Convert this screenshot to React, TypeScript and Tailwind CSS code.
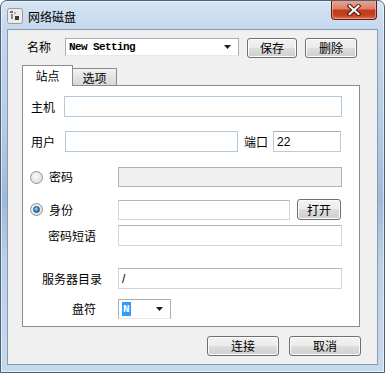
import React from 'react';

const cjk = "font-['Noto_Sans_CJK_SC',sans-serif] text-[12px] leading-none text-black";

function Btn({ label, className }: { label: string; className: string }) {
  return (
    <div
      className={`${className} ${cjk} flex items-center justify-center rounded-[3px] border border-[#707070] bg-[linear-gradient(#f2f2f2_0%,#ebebeb_50%,#dddddd_50%,#cfcfcf_100%)] shadow-[inset_0_0_0_1px_#fcfcfc]`}
    >
      {label}
    </div>
  );
}

function Field({ className, children }: { className: string; children?: React.ReactNode }) {
  return (
    <div className={`${className} flex items-center border px-[3px] font-['Liberation_Sans',sans-serif] text-[12px]`}>
      {children}
    </div>
  );
}

function Arrow() {
  return (
    <svg width="8" height="4" viewBox="0 0 8 4" className="ml-auto mr-[3px]">
      <path d="M0 0h7L3.5 4z" fill="#1a1a1a" />
    </svg>
  );
}

function Radio({ checked }: { checked?: boolean }) {
  return (
    <div className="flex h-[13px] w-[13px] items-center justify-center rounded-full border border-[#8e8f8f] bg-[radial-gradient(circle_at_40%_40%,#fafafa,#d6d6d6)]">
      {checked && (
        <div className="h-[7px] w-[7px] rounded-full border border-[#1c4f80] bg-[radial-gradient(circle_at_40%_35%,#9fd7f7,#2a80c4_60%,#135a94)]" />
      )}
    </div>
  );
}

export default function App() {
  return (
    <div className="h-[373px] w-[385px] overflow-hidden rounded-t-[7px] border border-[#4e6176] bg-[linear-gradient(180deg,#d6e5f5_0px,#c3d7ed_30px,#b6cde7_120px,#9fbad9_200px,#bad0e8_260px,#c6daee_373px)] px-[6px] pb-[7px] shadow-[inset_0_0_0_1px_rgba(255,255,255,0.55)]">
      {/* title bar */}
      <div className="flex h-[28px] items-start">
        <div className="mt-[7px] flex items-center gap-[5px]">
          <svg width="16" height="16" viewBox="0 0 16 16">
            <rect x="0.5" y="0.5" width="15" height="15" rx="2" fill="#ececec" stroke="#9a9a9a" />
            <rect x="3" y="3" width="3" height="2" fill="#6e6e6e" />
            <rect x="4" y="6" width="2" height="5" fill="#8a8a8a" />
            <rect x="8" y="8" width="4" height="4" fill="#3c3c3c" />
            <rect x="7" y="4" width="2" height="2" fill="#b0b0b0" />
          </svg>
          <span className={`${cjk} pt-[1px] text-[#1e1e1e]`}>网络磁盘</span>
        </div>
        <div className="ml-auto -mt-px mr-px flex h-[20px] w-[46px] items-center justify-center rounded-b-[4px] border border-t-0 border-[#5e1d12] bg-[linear-gradient(180deg,#e9a796_0%,#dc8068_45%,#c2391d_55%,#c6401f_80%,#d9735a_100%)] shadow-[inset_0_0_0_1px_rgba(255,190,170,0.55)]">
          <svg width="14" height="12" viewBox="0 0 14 12">
            <path d="M2.5 2l9 8M11.5 2l-9 8" stroke="#4a1a12" strokeWidth="4" strokeLinecap="square" />
            <path d="M2.5 2l9 8M11.5 2l-9 8" stroke="#ffffff" strokeWidth="2" strokeLinecap="square" />
          </svg>
        </div>
      </div>

      {/* client area */}
      <div className="h-[336px] w-[371px] border border-[#8a9bb0] bg-[#f0f0f0]">
        {/* name row */}
        <div className="mt-[8px] flex items-start">
          <span className={`${cjk} w-[57px] pl-[19px] pt-[3px]`}>名称</span>
          <Field className="h-[18px] w-[174px] border-[#abadb3] border-b-[#e3e9ef] bg-white">
            <span className="font-['Liberation_Mono',monospace] text-[11px] font-bold tracking-[-0.6px]">New Setting</span>
            <Arrow />
          </Field>
          <Btn label="保存" className="ml-[8px] h-[20px] w-[50px]" />
          <Btn label="删除" className="ml-[8px] h-[20px] w-[52px]" />
        </div>

        {/* tabs */}
        <div className="mt-[7px] flex h-[20px] items-end pl-[14px]">
          <div className={`${cjk} relative z-10 -mb-px flex h-[21px] w-[51px] items-start justify-center border border-b-0 border-[#898c95] bg-white pt-[4px]`}>
            站点
          </div>
          <div className={`${cjk} -ml-px flex h-[17px] w-[45px] items-center justify-center border border-b-0 border-[#898c95] bg-[linear-gradient(#f3f3f3,#e3e3e3_50%,#d9d9d9)] pt-[1px]`}>
            选项
          </div>
        </div>

        {/* tab panel */}
        <div className="ml-[14px] h-[242px] w-[338px] border border-[#898c95] bg-white">
          <div className="mt-[10px] flex h-[21px] items-center">
            <span className={`${cjk} w-[41px] pl-[8px]`}>主机</span>
            <Field className="h-[21px] w-[278px] border-[#b4c8dc] bg-white" />
          </div>

          <div className="mt-[14px] flex h-[21px] items-center">
            <span className={`${cjk} w-[42px] pl-[8px]`}>用户</span>
            <Field className="h-[21px] w-[173px] border-[#b4c8dc] bg-white" />
            <span className={`${cjk} ml-[6px] w-[29px]`}>端口</span>
            <Field className="h-[21px] w-[68px] border-[#c8c8c8] border-t-[#abadb3] bg-white">22</Field>
          </div>

          <div className="mt-[15px] flex h-[20px] items-center pl-[7px]">
            <Radio />
            <span className={`${cjk} ml-[6px] w-[69px]`}>密码</span>
            <Field className="h-[20px] w-[224px] border-[#adb2b5] bg-[#f0f0f0]" />
          </div>

          <div className="mt-[12px] flex h-[21px] items-center pl-[7px]">
            <Radio checked />
            <span className={`${cjk} ml-[6px] w-[69px]`}>身份</span>
            <Field className="h-[20px] w-[172px] border-[#d5d5d5] border-t-[#b5b5b5] bg-white" />
            <Btn label="打开" className="ml-[7px] h-[21px] w-[44px]" />
          </div>

          <div className="mt-[5px] flex h-[21px] items-center">
            <span className={`${cjk} w-[95px] pl-[25px]`}>密码短语</span>
            <Field className="h-[21px] w-[224px] border-[#d5d5d5] border-t-[#b5b5b5] bg-white" />
          </div>

          <div className="mt-[22px] flex h-[21px] items-center">
            <span className={`${cjk} w-[95px] pl-[19px]`}>服务器目录</span>
            <Field className="h-[21px] w-[224px] border-[#d5d5d5] border-t-[#b5b5b5] bg-white">/</Field>
          </div>

          <div className="mt-[10px] flex h-[20px] items-center">
            <span className={`${cjk} w-[95px] pl-[49px]`}>盘符</span>
            <Field className="h-[20px] w-[53px] border-[#abadb3] border-b-[#e3e9ef] bg-white px-[2px]">
              <span className="bg-[#3399ff] px-px font-['Liberation_Mono',monospace] text-[11px] font-bold leading-[14px] text-white">N</span>
              <Arrow />
            </Field>
          </div>
        </div>

        {/* bottom buttons */}
        <div className="mt-[9px] flex justify-end gap-[10px] pr-[16px]">
          <Btn label="连接" className="h-[20px] w-[72px]" />
          <Btn label="取消" className="h-[20px] w-[72px]" />
        </div>
      </div>
    </div>
  );
}
